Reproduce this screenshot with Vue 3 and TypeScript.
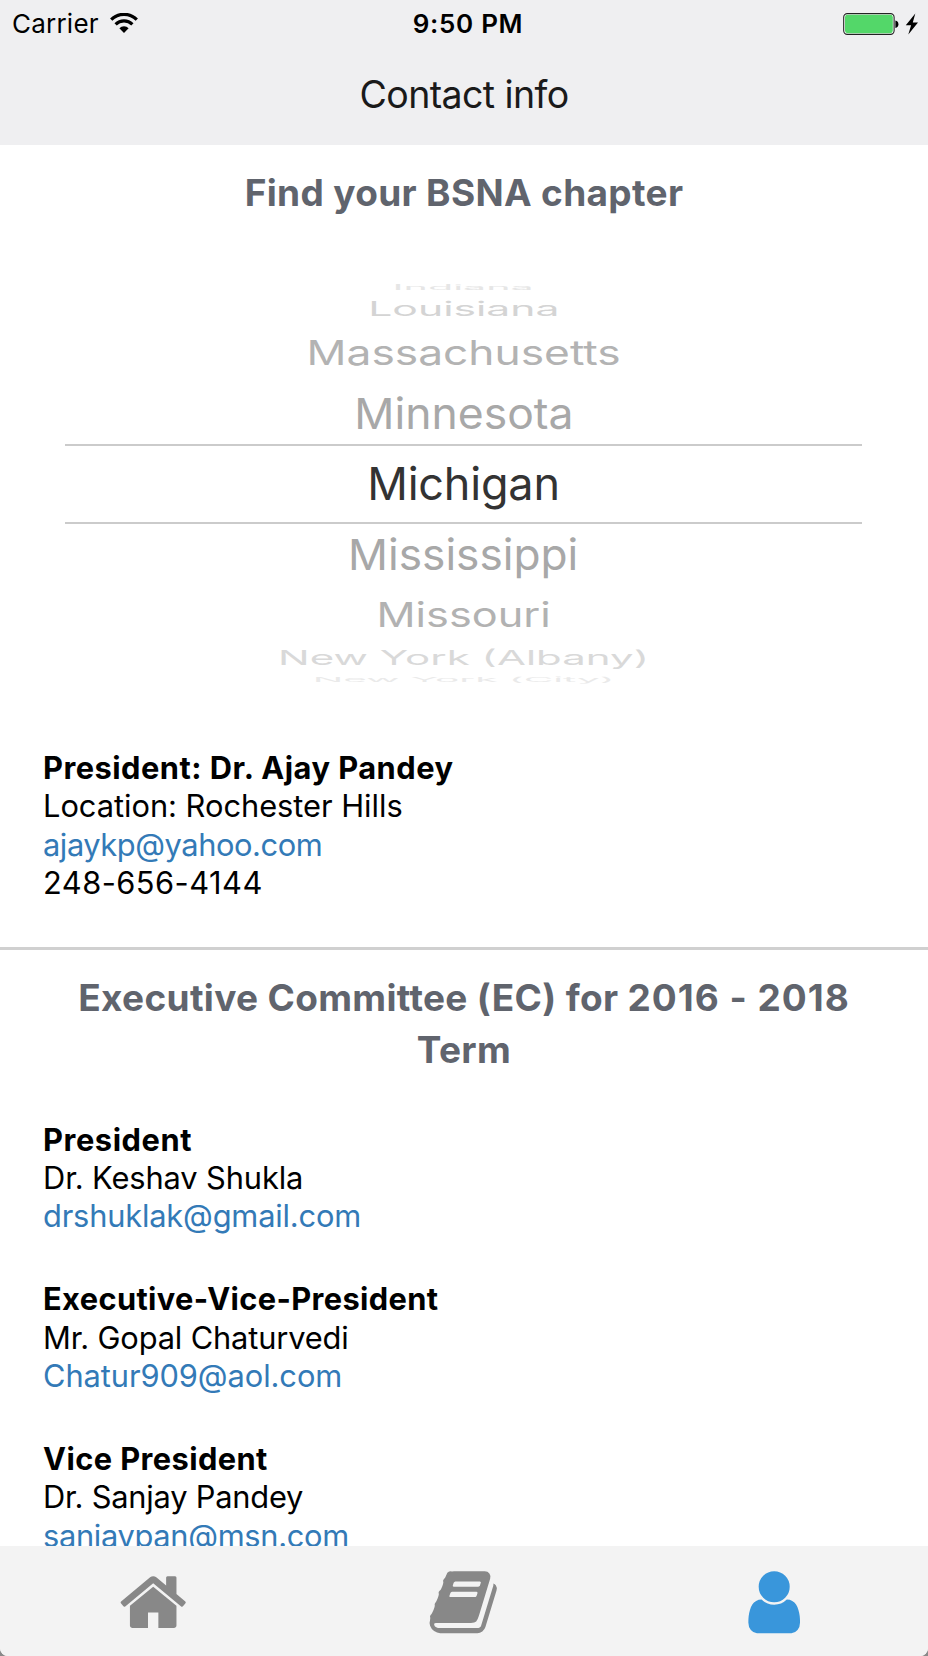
<script setup lang="ts">
interface WheelRow {
  name: string
  height: number
  scaleX: number
  scaleY: number
  color: string
}

interface Line {
  text: string
  kind: 'role' | 'plain' | 'mail'
  spacing: number
}

const wheelAbove: WheelRow[] = [
  { name: 'Indiana', height: 18, scaleX: 0.915, scaleY: 0.16, color: '#e6e6e6' },
  { name: 'Louisiana', height: 26, scaleX: 0.949, scaleY: 0.45, color: '#d4d4d4' },
  { name: 'Massachusetts', height: 61, scaleX: 0.984, scaleY: 0.755, color: '#b3b3b3' },
  { name: 'Minnesota', height: 61, scaleX: 0.988, scaleY: 0.95, color: '#a8a8a8' },
]

const wheelBelow: WheelRow[] = [
  { name: 'Mississippi', height: 62, scaleX: 0.982, scaleY: 0.95, color: '#a8a8a8' },
  { name: 'Missouri', height: 58, scaleX: 0.962, scaleY: 0.745, color: '#b2b2b2' },
  { name: 'New York (Albany)', height: 28, scaleX: 0.934, scaleY: 0.45, color: '#d9d9d9' },
  { name: 'New York (City)', height: 15, scaleX: 0.9, scaleY: 0.15, color: '#eaeaea' },
]

const chapter: Line[] = [
  { text: 'President: Dr. Ajay Pandey', kind: 'role', spacing: 0.485 },
  { text: 'Location: Rochester Hills', kind: 'plain', spacing: -0.02 },
  { text: 'ajaykp@yahoo.com', kind: 'mail', spacing: -0.42 },
  { text: '248-656-4144', kind: 'plain', spacing: 0.47 },
]

const committee: Line[][] = [
  [
    { text: 'President', kind: 'role', spacing: 0.58 },
    { text: 'Dr. Keshav Shukla', kind: 'plain', spacing: -0.1 },
    { text: 'drshuklak@gmail.com', kind: 'mail', spacing: -0.18 },
  ],
  [
    { text: 'Executive-Vice-President', kind: 'role', spacing: 0.37 },
    { text: 'Mr. Gopal Chaturvedi', kind: 'plain', spacing: -0.14 },
    { text: 'Chatur909@aol.com', kind: 'mail', spacing: -0.07 },
  ],
  [
    { text: 'Vice President', kind: 'role', spacing: 0.41 },
    { text: 'Dr. Sanjay Pandey', kind: 'plain', spacing: -0.2 },
    { text: 'sanjaypan@msn.com', kind: 'mail', spacing: -0.31 },
  ],
]

const rowStyle = (r: WheelRow) => ({ height: `${r.height}px`, color: r.color })
const warp = (r: WheelRow) => ({ transform: `scale(${r.scaleX}, ${r.scaleY})` })
const track = (l: Line) => ({ letterSpacing: `${l.spacing}px` })
</script>

<template>
  <div class="phone">
    <header class="top">
      <div class="status">
        <div class="network">
          <span class="carrier">Carrier</span>
          <svg class="wifi" viewBox="0 0 28 20" width="28" height="20">
            <path d="M1.2 6.6a18.1 18.1 0 0 1 25.6 0" fill="none" stroke="#000" stroke-width="3.2" />
            <path d="M5.6 11.3a11.9 11.9 0 0 1 16.8 0" fill="none" stroke="#000" stroke-width="3.2" />
            <path d="M9.4 15.3a6.4 6.4 0 0 1 9.2 0L14 20z" fill="#000" />
          </svg>
        </div>
        <span class="clock">9:50 PM</span>
        <svg class="battery" viewBox="0 0 76 22" width="76" height="22">
          <rect x="0.7" y="0.6" width="50.4" height="20.8" rx="3.6" fill="#fff" stroke="#222" stroke-width="1.1" />
          <rect x="2" y="1.8" width="47.8" height="18.4" rx="2.4" fill="#53d769" />
          <path d="M52.4 7.4q3 .6 3 3.8t-3 3.8z" fill="#000" />
          <path d="M72.3 0.5L62.8 12.3h5.3L65.3 21.4 75 9.4h-5.2z" fill="#000" />
        </svg>
      </div>
      <h1 class="title">Contact info</h1>
    </header>

    <main class="content">
      <h2 class="heading find">Find your BSNA chapter</h2>

      <div class="wheel">
        <div v-for="r in wheelAbove" :key="r.name" class="row" :style="rowStyle(r)">
          <span :style="warp(r)">{{ r.name }}</span>
        </div>
        <div class="row selected"><span>Michigan</span></div>
        <div v-for="r in wheelBelow" :key="r.name" class="row" :style="rowStyle(r)">
          <span :style="warp(r)">{{ r.name }}</span>
        </div>
      </div>

      <section class="card chapter">
        <p v-for="l in chapter" :key="l.text" :class="l.kind"><span :style="track(l)">{{ l.text }}</span></p>
      </section>

      <h2 class="heading term">Executive Committee (EC) for <span class="years">2016 - 2018</span><br />Term</h2>

      <section v-for="(person, i) in committee" :key="i" class="card member">
        <p v-for="l in person" :key="l.text" :class="l.kind"><span :style="track(l)">{{ l.text }}</span></p>
      </section>
    </main>

    <nav class="tabs">
      <a class="tab">
        <svg viewBox="0 0 1792 1792"><path d="M1472 992v480q0 26-19 45t-45 19h-384v-384h-256v384h-384q-26 0-45-19t-19-45v-480q0-1 .5-3t.5-3l575-474 575 474q1 2 1 6zm223-69l-62 74q-8 9-21 11h-3q-13 0-21-7l-692-577-692 577q-12 8-24 7-13-2-21-11l-62-74q-8-10-7-23.5t11-21.5l719-599q32-26 76-26t76 26l244 204v-195q0-14 9-23t23-9h192q14 0 23 9t9 23v408l219 182q10 8 11 21.5t-7 23.5z" /></svg>
      </a>
      <a class="tab">
        <svg viewBox="0 0 1792 1792"><path d="M1703 478q40 57 18 129l-275 906q-19 64-76.5 107.5t-122.5 43.5h-923q-77 0-148.5-53.5t-99.5-131.5q-24-67-2-127 0-4 3-27t4-37q1-8-3-21.5t-3-19.5q2-11 8-21t16.5-23.5 16.5-23.5q23-38 45-91.5t30-91.5q3-10 .5-30t-.5-28q3-11 17-28t17-23q21-36 42-92t25-90q1-9-2.5-32t.5-28q4-13 22-30.5t22-22.5q19-26 42.5-84.5t27.5-96.5q1-8-3-25.5t-2-26.5q2-8 9-18t18-23 17-21q8-12 16.5-30.5t15-35 16-36 19.5-32 26.5-23.5 36-11.5 47.5 5.5l-1 3q38-9 51-9h761q74 0 114 56t18 130l-274 906q-36 119-71.5 153.5t-128.5 34.5h-869q-27 0-38 15-11 16-1 43 24 70 144 70h923q29 0 56-15.5t35-41.5l300-987q7-22 5-57 38 15 59 43zm-1064 2q-4 13 2 22.5t20 9.5h608q13 0 25.5-9.5t16.5-22.5l21-64q4-13-2-22.5t-20-9.5h-608q-13 0-25.5 9.5t-16.5 22.5zm-83 256q-4 13 2 22.5t20 9.5h608q13 0 25.5-9.5t16.5-22.5l21-64q4-13-2-22.5t-20-9.5h-608q-13 0-25.5 9.5t-16.5 22.5z" /></svg>
      </a>
      <a class="tab active">
        <svg viewBox="0 0 1792 1792"><path d="M1536 1399q0 109-62.5 187t-150.5 78h-854q-88 0-150.5-78t-62.5-187q0-85 8.5-160.5t31.5-152 58.5-131 94-89 134.5-34.5q131 128 313 128t313-128q76 0 134.5 34.5t94 89 58.5 131 31.5 152 8.5 160.5zm-256-887q0 159-112.5 271.5t-271.5 112.5-271.5-112.5-112.5-271.5 112.5-271.5 271.5-112.5 271.5 112.5 112.5 271.5z" /></svg>
      </a>
    </nav>
  </div>
</template>

<style>
body {
  margin: 0;
  background: #8a8a8a;
}
</style>

<style scoped>
.phone {
  display: flex;
  flex-direction: column;
  width: 928px;
  height: 1656px;
  overflow: hidden;
  border-radius: 0 0 8px 8px;
  background: #fff;
  color: #000;
  font-family: Inter, 'Liberation Sans', sans-serif;
}

h1,
h2,
p {
  margin: 0;
}

.top {
  flex: none;
  height: 145px;
  background: #efeff1;
}

.status {
  display: grid;
  grid-template-columns: 1fr auto 1fr;
  align-items: center;
  height: 46px;
  padding: 0 9px 0 12px;
  font-size: 26px;
  line-height: 46px;
}

.network {
  display: flex;
  align-items: center;
  gap: 11px;
}

.carrier {
  padding-top: 1px;
  letter-spacing: 0.22px;
}

.wifi {
  margin-top: -2px;
}

.clock {
  padding-top: 1px;
  padding-left: 5px;
  font-weight: 600;
  letter-spacing: 0.7px;
}

.battery {
  justify-self: end;
}

.title {
  color: #1a1a1a;
  font-size: 37.5px;
  font-weight: 400;
  letter-spacing: -0.6px;
  line-height: 98px;
  text-align: center;
}

.content {
  flex: 1;
  min-height: 0;
  overflow: hidden;
}

.heading {
  color: #60646d;
  font-size: 37px;
  font-weight: 700;
  line-height: 51.7px;
  text-align: center;
}

.find {
  padding-top: 22px;
  height: 111px;
  letter-spacing: 0.34px;
}

.wheel {
  width: 797px;
  margin-left: 65px;
}

.row {
  display: flex;
  align-items: center;
  justify-content: center;
  font-size: 45px;
  line-height: 54px;
  white-space: nowrap;
}

.selected {
  box-sizing: border-box;
  height: 80px;
  border-top: 2px solid #cbcbcb;
  border-bottom: 2px solid #cbcbcb;
  color: #333;
  letter-spacing: -0.2px;
}

.card {
  padding-left: 43px;
  font-size: 30.8px;
  line-height: 38.4px;
  white-space: nowrap;
}

.role {
  font-weight: 700;
}

.mail {
  color: #337ab7;
}

.chapter {
  box-sizing: border-box;
  height: 263px;
  padding-top: 62px;
  border-bottom: 3px solid #d0d0d0;
}

.term {
  padding-top: 22px;
  height: 148.6px;
  letter-spacing: 0.34px;
}

.years {
  letter-spacing: 1px;
}

.member {
  height: 159.7px;
}

.tabs {
  display: grid;
  grid-template-columns: repeat(3, 1fr);
  flex: none;
  height: 110px;
  margin: 0 -2px;
  background: #f3f3f3;
}

.tab {
  display: flex;
  justify-content: center;
  padding-top: 19.7px;
  color: #888;
}

.tab svg {
  width: 72.4px;
  height: 72.4px;
  fill: currentColor;
}

.tab:first-child svg,
.tab:nth-child(2) svg {
  margin-left: -1px;
}

.active {
  color: #3996db;
}
</style>
